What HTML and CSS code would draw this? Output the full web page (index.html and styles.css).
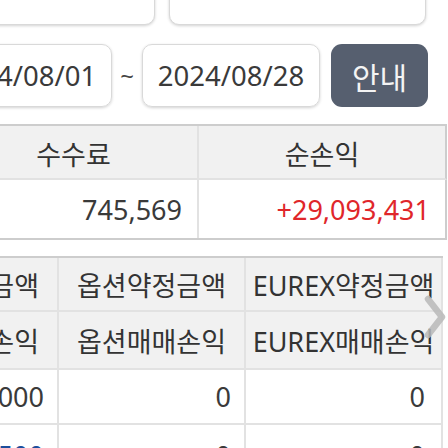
FILE: index.html
```html
<!DOCTYPE html>
<html lang="ko">
<head>
<meta charset="utf-8">
<link rel="stylesheet" href="styles.css">
</head>
<body>
<div class="page">
  <div class="top-row">
    <div class="box"></div>
    <div class="box"></div>
  </div>
  <div class="date-row">
    <div class="date">2024/08/01</div>
    <span class="tilde">~</span>
    <div class="date">2024/08/28</div>
    <button class="btn">안내</button>
  </div>

  <div class="t1">
    <div class="cell head">수수료</div>
    <div class="cell head">순손익</div>
    <div class="cell num">745,569</div>
    <div class="cell num red">+29,093,431</div>
  </div>

  <div class="t2-wrap">
    <div class="t2">
      <div class="cell head r1">선물약정금액</div>
      <div class="cell head r1">옵션약정금액</div>
      <div class="cell head r1">EUREX약정금액</div>
      <div class="cell head r2">선물매매손익</div>
      <div class="cell head r2">옵션매매손익</div>
      <div class="cell head r2">EUREX매매손익</div>
      <div class="cell num r3">2,150,000</div>
      <div class="cell num r3">0</div>
      <div class="cell num r3">0</div>
      <div class="cell num r4 blue">-1,320,500</div>
      <div class="cell num r4">0</div>
      <div class="cell num r4">0</div>
    </div>
    <svg class="chev" width="24" height="46" viewBox="0 0 24 46" aria-hidden="true">
      <polyline points="4,4 18,22 4,40" fill="none" stroke="#b9b9b9" stroke-width="6.5" stroke-linecap="round" stroke-linejoin="round"/>
    </svg>
  </div>
</div>
</body>
</html>
```

FILE: styles.css
```css
html, body {
  margin: 0;
  padding: 0;
  overflow: hidden;
  background: #ffffff;
}
body {
  width: 448px;
  height: 448px;
  font-family: "Noto Sans", "Noto Sans CJK KR", sans-serif;
  color: #333333;
}
.page {
  margin-left: -140px;
  width: 587px;
}
.top-row {
  display: flex;
  justify-content: flex-end;
  gap: 14px;
  padding-right: 21px;
  margin-top: -35px;
}
.box {
  width: 257px;
  height: 60px;
  box-sizing: border-box;
  border: 1px solid #d9d9d9;
  border-radius: 10px;
  box-shadow: 0 1px 3px rgba(0, 0, 0, 0.18);
  background: #fff;
}
.date-row {
  display: flex;
  justify-content: flex-end;
  align-items: center;
  padding-right: 19px;
  margin-top: 19px;
  height: 63px;
}
.date {
  width: 178px;
  height: 63px;
  box-sizing: border-box;
  border: 1px solid #d9d9d9;
  border-radius: 10px;
  box-shadow: 0 1px 3px rgba(0, 0, 0, 0.18);
  display: flex;
  align-items: center;
  justify-content: center;
  font-size: 27.5px;
  color: #3a3a3a;
}
.tilde {
  width: 30px;
  text-align: center;
  font-size: 24px;
  color: #444;
}
.btn {
  margin-left: 11px;
  width: 97px;
  height: 63px;
  border: 0;
  border-radius: 11px;
  background: #565f6f;
  color: #f4f4f4;
  font-family: "Noto Sans CJK KR", sans-serif;
  font-size: 30px;
  padding: 0;
}
.cell {
  box-sizing: border-box;
  display: flex;
  align-items: center;
  border-right: 2px solid #e2e2e2;
  border-bottom: 2px solid #e2e2e2;
  padding: 0 15px;
  white-space: nowrap;
}
.head {
  background: #f1f1f1;
  justify-content: center;
  font-family: "Noto Sans CJK KR", sans-serif;
  font-size: 27px;
  color: #333;
  padding-top: 3px;
}
.t2 .head {
  font-family: "Noto Sans", "Noto Sans CJK KR", sans-serif;
  padding-top: 0;
}
.num {
  justify-content: flex-end;
  font-size: 27px;
  color: #3a3a3a;
}
.red { color: #e0262a; }
.blue { color: #1c4e9c; }

.t1 {
  margin-top: 17px;
  margin-left: auto;
  width: 497px;
  display: grid;
  grid-template-columns: 249px 248px;
  grid-template-rows: 54px 58px;
  border-top: 2px solid #cdcdcd;
  border-bottom: 2px solid #cdcdcd;
}
.t1 .cell:nth-child(2n) { border-right-color: #cdcdcd; }
.t1 .num { border-bottom: 0; padding-right: 15px; }

.t2-wrap {
  position: relative;
  margin-top: 16px;
  margin-left: 12px;
  width: 571px;
}
.t2 {
  display: grid;
  grid-template-columns: 187px 187px 197px;
  grid-template-rows: 54px 58px 55px 62px;
  border-top: 2px solid #cdcdcd;
}
.t2 .num { padding-right: 13px; }
.t2 .cell:nth-child(3n) { padding-right: 16px; }
.t2 .head:nth-child(3n) { padding: 0 2px; }
.chev {
  position: absolute;
  left: 552px;
  top: 39px;
  opacity: 0.85;
}
```
